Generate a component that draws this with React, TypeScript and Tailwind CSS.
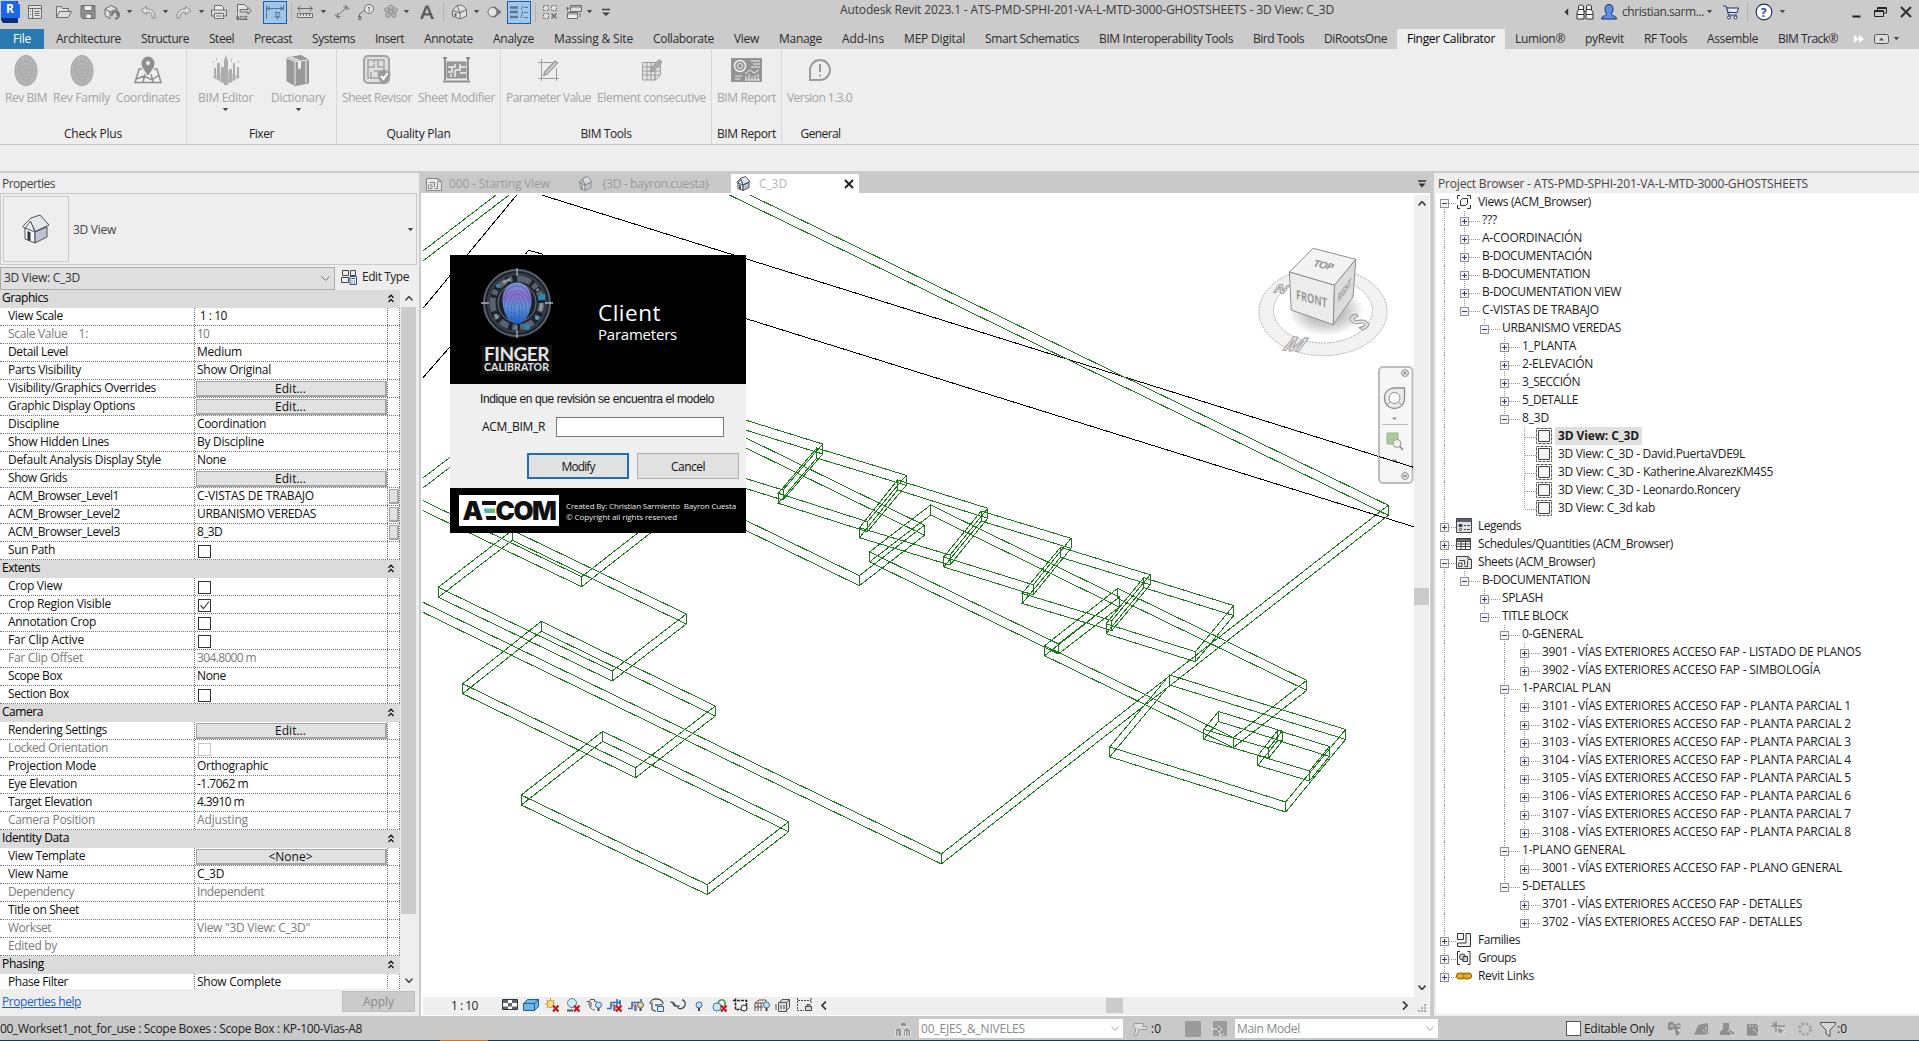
import React, { useLayoutEffect, useRef } from 'react';

/* Text fitted to a given advance width by distributing letter spacing. */
function T({ w, c = '', children }: { w?: number; c?: string; children: string }) {
  const ref = useRef<HTMLSpanElement>(null);
  useLayoutEffect(() => {
    const el = ref.current;
    if (!el || !w) return;
    el.style.letterSpacing = '0px';
    const natural = el.getBoundingClientRect().width;
    el.style.letterSpacing = `${(w - natural) / children.length}px`;
  }, [w, children]);
  return (
    <span ref={ref} className={`inline-block shrink-0 whitespace-pre ${c}`}>
      {children}
    </span>
  );
}

type IcProps = { c?: string; s?: string; f?: string; vb?: string; children: React.ReactNode };
function Ic({ c = 'w-4 h-4', s = '#6e6e6e', f = 'none', vb = '0 0 16 16', children }: IcProps) {
  return (
    <svg className={`block shrink-0 ${c}`} viewBox={vb} fill={f} stroke={s} strokeWidth="1">
      {children}
    </svg>
  );
}

const Arrow = ({ c = '' }: { c?: string }) => (
  <svg className={`block h-[4px] w-[7px] shrink-0 ${c}`} viewBox="0 0 7 4">
    <path d="M0.8 0h5.4L3.5 3.300z" fill="#4a4a4a" />
  </svg>
);

const Sep = ({ c = '' }: { c?: string }) => <span className={`h-5 w-px shrink-0 bg-[#b4b4b4] ${c}`} />;

function House({ c = 'w-4 h-4', dim = false, sw = 1.8 }: { c?: string; dim?: boolean; sw?: number }) {
  return (
    <svg className={`block shrink-0 ${c} ${dim ? 'opacity-50' : ''}`} viewBox="0 0 30 30" stroke="#3b434e" strokeWidth={sw} strokeLinejoin="round">
      <path d="M4 14L14 18V29L4 25z" fill="#f6f7f9" />
      <path d="M14 18L26 13V23L14 29z" fill="#bcc4cf" />
      <path d="M10 4L19 1L28 11L14 17.500L9.500 6.500z" fill="#e3e7ec" />
      <path d="M10 4L1.500 12.500L4 14.500L9.500 7L14 17.500" fill="#f6f7f9" />
      <path d="M6.500 17L9.500 18.200V27L6.500 25.800z" fill="#2f353d" stroke="none" />
    </svg>
  );
}

const SheetIcon = ({ c = 'w-4 h-4', s = '#6a6a6a' }: { c?: string; s?: string }) => (
  <Ic c={c} s={s}>
    <path d="M0.500 2.500H12l3.500 3V14.500H0.500zM12 2.500v3h3.500" fill="#e6e6e6" />
    <path d="M2.500 9.500V12.500h3.500V9H2.500M3.500 6.500h5V11M8.500 12.500h3V6.500" />
  </Ic>
);

/* ---------- Title bar ---------- */

function TitleBar() {
  return (
    <header className="flex h-[29px] items-start bg-[#cbcbcb] pt-1 text-[#3a3a3a]">
      <div className="flex h-4 grow items-center">
        <svg className="h-[22px] w-5 shrink-0" viewBox="0 0 20 22">
          <path d="M1 0H18V22H3L1 19z" fill="#0b2f7d" />
          <path d="M1 0H16L20 4V17H1z" fill="#1a67ea" />
          <text x="6" y="12" fontSize="12" fontWeight="700" fill="#fff" fontFamily="Open Sans, sans-serif">R</text>
        </svg>
        <Ic c="ml-[7px] w-4 h-4">
          <path d="M1.500 1.500h13v13h-13z" fill="#e2e2e2" /><path d="M1.500 4.500h13M5.500 4.500v10M3 7.500h1M3 10.500h1M7.500 7.500h5M7.500 9.500h5M7.500 11.500h5" />
        </Ic>
        <Ic c="ml-[13px] w-4 h-4"><path d="M0.500 13.500V2.500h5l1 2h6v3M0.500 13.500l3-6h12l-3.500 6z" fill="#dedede" /></Ic>
        <Ic c="ml-2 w-4 h-4"><path d="M1 1.500h14v13H2.500L1 13z" fill="#909090" /><path d="M4 1.500h8v5H4zM4.500 10h7v4.500h-7z" fill="#eee" /><path d="M6 11v3" /></Ic>
        <Ic c="ml-2 w-4 h-4"><path d="M1 5l6-3.500 6 3V9M1 5v6.500l5 3V8zM6 8l7-3.500" fill="#e0e0e0" /><path d="M8 11.500a3.500 3.500 0 1 1 3 3" strokeWidth="2" /><path d="M12 8l3 1-2 3" fill="#777" /></Ic>
        <Arrow c="ml-[6px]" />
        <Ic c="ml-[7px] w-4 h-4"><path d="M6.500 2.500L1 6.500l5.500 4V8.500c4-.5 6 1 5.500 5.500h3c.5-6-3-9.500-8.500-9z" fill="#dcdcdc" stroke="#8a8a8a" /></Ic>
        <Arrow c="ml-[6px]" />
        <Ic c="ml-[7px] w-4 h-4"><path d="M9.500 2.500L15 6.500l-5.500 4V8.500c-4-.5-6 1-5.500 5.500h-3c-.5-6 3-9.500 8.500-9z" fill="#dcdcdc" stroke="#8a8a8a" /></Ic>
        <Arrow c="ml-[6px]" />
        <Ic c="ml-[6px] w-4 h-4"><path d="M3.500 6V1.500h7l2 2V6" fill="#eee" /><path d="M0.500 6h15v6h-15z" fill="#d8d8d8" /><path d="M3.500 9.500h9v5h-9z" fill="#eee" /><path d="M5 12h6" /></Ic>
        <Ic c="ml-[9px] w-4 h-4"><path d="M1.500 9V0.500h7l3 3V9M1.500 10v5.500h10" fill="#e4e4e4" /><path d="M4 5.500h8v-2l3.500 3.200L12 10V8H4z" fill="#ccc" /><text x="0" y="15.500" fontSize="6" fontWeight="700" fill="#666" stroke="none" fontFamily="Open Sans, sans-serif">PDF</text></Ic>
        <span className="ml-[11px] flex h-[23px] w-6 items-center justify-center border border-[#1c5fad] bg-[#9fc7ee]">
          <Ic c="w-5 h-4" vb="0 0 20 16" s="#5c7690"><path d="M1.500 1v14M18.500 1v5M2 4.500h16M5 2.500l-3 2 3 2M15 2.500l3 2-3 2M10 8.500h5M11 9v4h3V9M12.500 13v3M9.500 13h6" /></Ic>
        </span>
        <Sep c="ml-1" />
        <Ic c="ml-[5px] w-4 h-4"><path d="M1 4.500h14M3.500 2l-3 2.500 3 2.500M12.500 2l3 2.500-3 2.500" /><path d="M0.500 9.500h15v4h-15zM3.500 10v2M6.500 10v2M9.500 10v2M12.500 10v2" fill="#ddd" /></Ic>
        <Arrow c="ml-[7px]" />
        <Ic c="ml-[7px] w-4 h-4"><path d="M3 12L13 3M0.500 10l4.500 5M11 1l4.500 4.500M3.500 9v3.500h3M13 6V3H9.500" /></Ic>
        <Ic c="ml-2 w-4 h-4"><circle cx="11" cy="5" r="4.500" fill="#e4e4e4" /><path d="M6.500 6.500L1.500 10v4M0 12.500h3v3H0z" /><path d="M10 4l1.200-1V8" /></Ic>
        <Ic c="ml-[9px] w-4 h-4" s="#8f8f8f">
          <g fill="#b8b8b8"><circle cx="8" cy="3.500" r="2.300" /><circle cx="4" cy="6" r="2.300" /><circle cx="12" cy="6" r="2.300" /><circle cx="5" cy="11" r="2.300" /><circle cx="11" cy="11" r="2.300" /><circle cx="8" cy="7.500" r="2" /></g>
        </Ic>
        <Arrow c="ml-1" />
        <Ic c="ml-[9px] w-4 h-4" s="none"><path d="M1 15L6.500 1.500h3L15 15h-3l-1.200-3.500H5.200L4 15zM6 9.200h4L8 4z" fill="#5f5f5f" fillRule="evenodd" /></Ic>
        <Sep c="ml-2" />
        <Ic c="ml-[7px] w-4 h-4"><path d="M1.500 6.500L6 1.500l5-.5 4.500 4.500V12L9 15 1.500 12zM1.500 6.500L9 9l6.500-3.500M9 9v6" fill="#e0e0e0" /><path d="M9 9L6 1.500" /><path d="M4.500 9v3.500" strokeWidth="2" /></Ic>
        <Arrow c="ml-[6px]" />
        <Ic c="ml-[6px] w-4 h-4"><path d="M8 2.500L15 8l-7 5.500z" fill="#777" /><circle cx="6.500" cy="8" r="4.500" fill="#e6e6e6" /></Ic>
        <span className="ml-[5px] flex h-[23px] w-6 items-center justify-center border border-[#1c5fad] bg-[#9fc7ee]">
          <Ic c="w-5 h-4" vb="0 0 20 16" s="#5c7690"><path d="M1 3.500h8M1 8h8M1 13h8" strokeWidth="2.500" /><path d="M14 2l-2 4M14 7l-2 7M15 3.500h4M15 8.500h4M15 13.500h4" /></Ic>
        </span>
        <Sep c="ml-1" />
        <Ic c="ml-[6px] w-4 h-4"><path d="M1.500 1.500h5v5h-5zM9.500 1.500h5v5h-5zM1.500 9.500h5v5h-5z" strokeDasharray="1.500 1" fill="#ddd" /><path d="M9.500 9.500l5 5M14.500 9.500l-5 5" strokeWidth="1.500" /></Ic>
        <Ic c="ml-2 w-4 h-4"><path d="M4.500 1.500h11v6h-11z" fill="#ddd" /><path d="M4.500 3h11" /><path d="M1.500 8.500h10v6h-10z" fill="#eee" /><path d="M1.500 10h10M1.500 7V3M0 5l1.500-2L3 5M14 9v4" /></Ic>
        <Arrow c="ml-1" />
        <Ic c="ml-2 w-[10px] h-3" vb="0 0 10 12" s="#444"><path d="M1 3.500h8" strokeWidth="1.500" /><path d="M1 6.500h8L5 10z" fill="#444" stroke="none" /></Ic>
        <div className="ml-[229px] -mt-1"><T w={494}>Autodesk Revit 2023.1 - ATS-PMD-SPHI-201-VA-L-MTD-3000-GHOSTSHEETS - 3D View: C_3D</T></div>
        <Ic c="ml-[230px] w-[5px] h-2" vb="0 0 6 9" s="none"><path d="M5 0v9L0.500 4.500z" fill="#333" /></Ic>
        <Ic c="ml-[7px] w-[18px] h-4" s="#333" vb="0 0 18 16"><path d="M2.500 6V2L4 1h2.500l1 1v4l.5 1v8H1V8zM15.500 6V2L14 1h-2.500l-1 1v4L10 7v8h7V8zM8 7.500h2M1 10.500h7M10 10.500h7M2.500 5.500h5M10.500 5.500h5" fill="#f4f4f4" /></Ic>
        <Ic c="ml-[7px] w-4 h-4" s="#1d2f63"><path d="M8 0.500c3 0 4 2 4 4.500S10.500 9 10.500 10.500s5 1 5 4.500H0.500c0-3.500 5-3 5-4.500S4 7.500 4 5 5 .5 8 .5z" fill="#5d8ee6" /></Ic>
        <T c="ml-[5px]" w={82}>christian.sarm...</T>
        <Arrow c="ml-[2px]" />
        <Ic c="ml-[10px] w-4 h-4" s="#1d2f63"><path d="M0 2h3l2.500 9H14M3.500 4h12L14 8.500H5" fill="#e8eefb" /><circle cx="6" cy="13.500" r="1.500" fill="#fff" /><circle cx="12.500" cy="13.500" r="1.500" fill="#fff" /></Ic>
        <Sep c="ml-2" />
        <Ic c="ml-[7px] w-[18px] h-[18px]" s="#1d2f63"><circle cx="8" cy="8" r="7" fill="#fff" /><text x="5.200" y="12" fontSize="11" fontWeight="700" fill="#2553c4" stroke="none" fontFamily="Open Sans, sans-serif">?</text></Ic>
        <Arrow c="ml-[6px]" />
        <Ic c="ml-[66px] w-[9px] h-3" vb="0 0 9 12" s="#222"><path d="M0.500 10.500h8" strokeWidth="2" /></Ic>
        <Ic c="ml-[13px] w-[13px] h-3" vb="0 0 13 12" s="#222"><path d="M3.500 4V1.500h9V7H9.500M0.500 4.500h9v6h-9zM0.500 5.500h9M3.500 2.500h9" /></Ic>
        <Ic c="ml-[13px] w-3 h-3" vb="0 0 12 12" s="#333"><path d="M1 1l10 10M11 1L1 11" strokeWidth="2.200" /></Ic>
      </div>
    </header>
  );
}

const TABS: [string, number][] = [
  ['Architecture', 65], ['Structure', 48], ['Steel', 25], ['Precast', 38], ['Systems', 43], ['Insert', 29],
  ['Annotate', 49], ['Analyze', 41], ['Massing & Site', 79], ['Collaborate', 61], ['View', 25], ['Manage', 43],
  ['Add-Ins', 42], ['MEP Digital', 61], ['Smart Schematics', 94], ['BIM Interoperability Tools', 134],
  ['Bird Tools', 51], ['DiRootsOne', 63], ['Finger Calibrator', 88], ['Lumion®', 50], ['pyRevit', 39],
  ['RF Tools', 43], ['Assemble', 51], ['BIM Track®', 60],
];

function TabRow() {
  return (
    <nav className="flex h-5 items-stretch bg-[#cbcbcb] text-[#2b2b2b]">
      <div className="mr-[2px] flex w-11 items-center justify-center bg-[#2a7ab2] text-white"><T w={18}>File</T></div>
      {TABS.map(([t, w]) => (
        <div key={t} className={`flex items-center px-[10px] ${t === 'Finger Calibrator' ? 'bg-[#eeeeee] text-black' : ''}`}>
          <T w={w}>{t}</T>
        </div>
      ))}
      <div className="ml-[6px] flex items-center">
        <Ic c="w-[10px] h-2" vb="0 0 10 8" s="none"><path d="M0 0l5 4-5 4zM5 0l5 4-5 4z" fill="#fff" /></Ic>
        <Ic c="ml-[10px] w-[15px] h-[10px]" vb="0 0 15 10" s="#555"><rect x="0.500" y="0.500" width="14" height="9" rx="2" fill="#ddd" /><path d="M5 6.500h5L7.500 3.500z" fill="#555" stroke="none" /></Ic>
        <Arrow c="ml-1" />
      </div>
    </nav>
  );
}

/* ---------- Ribbon ---------- */

const Egg = () => (
  <svg className="h-[31px] w-6" viewBox="0 0 24 31">
    <path d="M12 .5c6 0 11 7 11 15.500S18.500 30.500 12 30.500 1 24.500 1 16 6 .5 12 .5z" fill="#b4b4b4" stroke="#a6a6a6" />
    <path d="M5 10c3-5 11-5 14 0M4 16c2-7 14-7 16 0M6 22c-1-10 12-11 12 0M9 25c-2-9 6-9 6 1M12 15v11" fill="none" stroke="#a2a2a2" strokeDasharray="2 1" />
  </svg>
);

const RIcons: Record<string, React.ReactNode> = {
  'Rev BIM': <Egg />,
  'Rev Family': <Egg />,
  Coordinates: (
    <Ic c="w-[28px] h-[28px]" vb="0 0 28 28" s="#8f8f8f">
      <path d="M8 13H5L1 26.500h26L23 13h-3M9 26l2-8M19 26l-2-8M2.500 23L10 20l8 4 7-5" strokeWidth="1.500" />
      <path d="M14 19c-4-6-6-8-6-12a6 6 0 1 1 12 0c0 4-2 6-6 12z" fill="#8c8c8c" /><circle cx="14" cy="7" r="2.500" fill="#eee" />
    </Ic>
  ),
  'BIM Editor': (
    <Ic c="w-[30px] h-[31px]" vb="0 0 30 31" s="none">
      <path d="M1 22l14-7 14 7-14 8z" fill="#c9c9c9" />
      <path d="M3 13h2v11l-2-1zM6 8h3v18l-3-2zM10 12h3v16l-3-1zM13 6l2-6 2 6v24h-4zM18 14h3v13l-3 1zM22 8h2v17l-2 1zM26 12h2v11l-2 1z" fill="#adadad" />
      <path d="M2 6h1v2H2zM20 4h1v3h-1zM27 6h1v2h-1zM5 3h1v2H5z" fill="#bbb" />
    </Ic>
  ),
  Dictionary: (
    <Ic c="w-6 h-[31px]" vb="0 0 24 31" s="#909090">
      <path d="M1 3L15 .5 22.500 5V28L9 30.500 1 26z" fill="#999" /><path d="M1 3l8 3.500V30M9 6.500L22.500 5M3 2.500l8 3M5 2l8 3" stroke="#eee" /><path d="M12 6v9l1.500-2 1.500 1.500V6z" fill="#eee" stroke="none" /><path d="M20 6v22" stroke="#eee" />
    </Ic>
  ),
  'Sheet Revisor': (
    <Ic c="w-[28px] h-[30px]" vb="0 0 28 30" s="#a5a5a5">
      <rect x="1" y="1" width="25" height="27" rx="4" strokeWidth="2" fill="#dedede" /><path d="M5 5h16v18H5zM5 12h6v-3M11 5v3M11 16h10M15 5v7h6M8 23v-6" strokeWidth="1.500" />
      <path d="M15 17l6-2 6 2c0 7-2 10-6 12-4-2-6-5-6-12z" fill="#999" /><path d="M18 21l2.500 3 4-6" stroke="#fff" strokeWidth="2" />
    </Ic>
  ),
  'Sheet Modifier': (
    <Ic c="w-[29px] h-[26px]" vb="0 0 29 26" s="#8f8f8f">
      <path d="M3 1v22M26 1v22M1 1h4M24 1h4M1 24.500h27" strokeWidth="2" /><path d="M5 5h19v16H5z" fill="#9a9a9a" /><path d="M6 10h7V7M10 10v5H6M13 13h5V7M18 10h6M13 13v7M18 16h6M9 20v-3" stroke="#eee" strokeWidth="1.500" />
    </Ic>
  ),
  'Parameter Value': (
    <Ic c="w-[22px] h-[22px]" vb="0 0 22 22" s="#9d9d9d">
      <path d="M3.500 0v22M0 3.500h15M0 19.500h21M18.500 9v13" /><path d="M5 17l2-5L17 1.500l3 2.500L9.500 15z" fill="#aaa" /><path d="M8 14L18 4" stroke="#eee" />
    </Ic>
  ),
  'Element consecutive': (
    <Ic c="w-[22px] h-[22px]" vb="0 0 22 22" s="#9d9d9d">
      <path d="M1.500 3.500h18V16l-5 5h-13z" fill="#e4e4e4" /><path d="M2 8h17M2 12h17M2 16h12M6 4v17M10 4v17M14 4v17M14 21v-5h5" /><path d="M9 13l1-4L18 .5l3 2.500L13 12z" fill="#aaa" />
    </Ic>
  ),
  'BIM Report': (
    <Ic c="w-[31px] h-[24px]" vb="0 0 31 24" s="#eee">
      <path d="M0 0h31v24H0z" fill="#949494" stroke="none" /><circle cx="9" cy="8" r="5.500" strokeWidth="1.500" /><circle cx="9" cy="8" r="2.500" /><path d="M20 3h9M22 6h7M20 9h9M4 18h7M4 21h5M14 22h15M15 22v-4M18 22v-6M21 22v-4M24 22v-5M27 22v-6M14 16l5-4 4 3 5-3" />
    </Ic>
  ),
  'Version 1.3.0': (
    <Ic c="w-6 h-6" vb="0 0 24 24" s="#9c9c9c">
      <path d="M2 22V12a10 10 0 1 1 10 10z" strokeWidth="2" /><path d="M12 6v8M12 16.500v2" strokeWidth="2" />
    </Ic>
  ),
};

function RibbonPanel({ title, tw, c, items }: { title: string; tw: number; c: string; items: [string, number, boolean?][] }) {
  return (
    <section className={`flex shrink-0 flex-col border-r border-[#d8d8d8] ${c}`}>
      <div className="flex h-[75px] gap-[6px] pl-[5px] text-[#a3a3a3]">
        {items.map(([t, w, drop]) => (
          <div key={t} className={`flex flex-col items-center ${drop ? 'pl-[6px] pr-[6px]' : ''}`}>
            <div className="flex h-[42px] items-center justify-center">{RIcons[t]}</div>
            <div className="h-[14px] leading-[14px]"><T w={w}>{t}</T></div>
            {drop && <Arrow c="mt-[3px]" />}
          </div>
        ))}
      </div>
      <div className="text-center leading-5 text-[#222]"><T w={tw}>{title}</T></div>
    </section>
  );
}

function Ribbon() {
  return (
    <div className="h-[96px] shrink-0 border-b border-[#c3c3c3] bg-[#eeeeee]">
      <div className="flex h-[95px]">
        <RibbonPanel c="w-[187px]" title="Check Plus" tw={58} items={[['Rev BIM', 42], ['Rev Family', 57], ['Coordinates', 64]]} />
        <RibbonPanel c="w-[150px]" title="Fixer" tw={25} items={[['BIM Editor', 55, true], ['Dictionary', 54, true]]} />
        <RibbonPanel c="w-[164px]" title="Quality Plan" tw={64} items={[['Sheet Revisor', 70], ['Sheet Modifier', 77]]} />
        <RibbonPanel c="w-[211px]" title="BIM Tools" tw={51} items={[['Parameter Value', 85], ['Element consecutive', 109]]} />
        <RibbonPanel c="w-[70px]" title="BIM Report" tw={59} items={[['BIM Report', 59]]} />
        <RibbonPanel c="w-[77px] border-r-0" title="General" tw={40} items={[['Version 1.3.0', 65]]} />
      </div>
    </div>
  );
}

/* ---------- Properties ---------- */

type Row = { h?: string; n?: string; v?: string; b?: string; k?: 0 | 1 | 2; g?: boolean; m?: boolean; w?: number; vw?: number };
const ROWS: Row[] = [
  { h: 'Graphics', w: 46 },
  { n: 'View Scale', w: 55, v: ' 1 : 10', vw: 30 },
  { n: 'Scale Value    1:', w: 80, v: '10', vw: 12, g: true },
  { n: 'Detail Level', w: 60, v: 'Medium', vw: 45 },
  { n: 'Parts Visibility', w: 73, v: 'Show Original', vw: 74 },
  { n: 'Visibility/Graphics Overrides', w: 148, b: 'Edit...' },
  { n: 'Graphic Display Options', w: 127, b: 'Edit...' },
  { n: 'Discipline', w: 51, v: 'Coordination', vw: 69 },
  { n: 'Show Hidden Lines', w: 101, v: 'By Discipline', vw: 67 },
  { n: 'Default Analysis Display Style', w: 153, v: 'None', vw: 29 },
  { n: 'Show Grids', w: 59, b: 'Edit...' },
  { n: 'ACM_Browser_Level1', w: 111, v: 'C-VISTAS DE TRABAJO', vw: 117, m: true },
  { n: 'ACM_Browser_Level2', w: 112, v: 'URBANISMO VEREDAS', vw: 119, m: true },
  { n: 'ACM_Browser_Level3', w: 112, v: '8_3D', vw: 25, m: true },
  { n: 'Sun Path', w: 47, k: 0 },
  { h: 'Extents', w: 38 },
  { n: 'Crop View', w: 54, k: 0 },
  { n: 'Crop Region Visible', w: 103, k: 1 },
  { n: 'Annotation Crop', w: 88, k: 0 },
  { n: 'Far Clip Active', w: 76, k: 0 },
  { n: 'Far Clip Offset', w: 75, v: '304.8000 m', vw: 59, g: true },
  { n: 'Scope Box', w: 54, v: 'None', vw: 29 },
  { n: 'Section Box', w: 61, k: 0 },
  { h: 'Camera', w: 41 },
  { n: 'Rendering Settings', w: 99, b: 'Edit...' },
  { n: 'Locked Orientation', w: 100, k: 2, g: true },
  { n: 'Projection Mode', w: 88, v: 'Orthographic', vw: 71 },
  { n: 'Eye Elevation', w: 69, v: '-1.7062 m', vw: 51 },
  { n: 'Target Elevation', w: 84, v: '4.3910 m', vw: 47 },
  { n: 'Camera Position', w: 87, v: 'Adjusting', vw: 51, g: true },
  { h: 'Identity Data', w: 67 },
  { n: 'View Template', w: 77, b: '<None>' },
  { n: 'View Name', w: 60, v: 'C_3D', vw: 27 },
  { n: 'Dependency', w: 66, v: 'Independent', vw: 67, g: true },
  { n: 'Title on Sheet', w: 71 },
  { n: 'Workset', w: 43, v: 'View "3D View: C_3D"', vw: 113, g: true },
  { n: 'Edited by', w: 49, g: true },
  { h: 'Phasing', w: 42 },
  { n: 'Phase Filter', w: 60, v: 'Show Complete', vw: 84 },
];

function PropRow({ r }: { r: Row }) {
  if (r.h)
    return (
      <div className="flex h-[18px] items-start justify-between bg-[#dbdbdb] pl-[2px] pr-[6px] leading-4">
        <T w={r.w}>{r.h}</T>
        <Ic c="mt-[4px] w-[6px] h-[9px]" vb="0 0 6 9" s="#111"><path d="M0.500 3.800L3 1.200l2.500 2.600M0.500 8L3 5.400 5.500 8" strokeWidth="1.300" /></Ic>
      </div>
    );
  return (
    <div className={`flex h-[18px] items-stretch border-b border-dotted border-[#777] leading-4 ${r.g ? 'text-[#7b7b7b]' : 'text-[#111]'}`}>
      <div className="w-[194px] pl-2"><T w={r.w}>{r.n as string}</T></div>
      <div className={`flex w-[193px] border-l border-dotted border-[#777] ${r.b ? 'pl-px' : 'pl-[2px]'}`}>
        {r.v && <T w={r.vw}>{r.v}</T>}
        {r.b && (
          <button className="mt-px h-4 w-[191px] border border-r-2 border-b-2 border-[#a5a5a5] bg-[#e1e1e1] pr-px text-center leading-[13px] text-[#111]">{r.b}</button>
        )}
        {r.k !== undefined && (
          <span className={`ml-px mt-[3px] h-[13px] w-[13px] border bg-white ${r.k === 2 ? 'border-[#c8c8c8]' : 'border-[#333]'}`}>
            {r.k === 1 && <Ic c="w-[11px] h-[11px]" vb="0 0 11 11" s="#444"><path d="M1.500 5.500l3 3 5.500-7" strokeWidth="1.200" /></Ic>}
          </span>
        )}
      </div>
      <div className="flex w-[13px] border-x border-dotted border-[#777] pl-px pt-px">
        {r.m && <span className="h-[15px] w-[10px] border border-r-2 border-b-2 border-[#a5a5a5] bg-[#e1e1e1]" />}
      </div>
    </div>
  );
}

function Properties() {
  return (
    <aside className="flex w-[419px] shrink-0 flex-col bg-[#eeeeee]">
      <div className="h-5 pl-[2px] leading-[22px] text-[#444]"><T w={53}>Properties</T></div>
      <div className="flex h-[72px] w-[417px] items-center border border-[#c9c9c9] pl-[2px]">
        <div className="flex h-[66px] w-[66px] items-center justify-center border border-[#c9c9c9]"><House c="w-[30px] h-[30px]" sw={0.9} /></div>
        <T c="ml-[4px] mt-[2px] text-[#444]" w={43}>3D View</T>
        <Arrow c="ml-auto mr-[2px] mt-[2px]" />
      </div>
      <div className="flex h-[25px] items-center pt-px">
        <div className="flex h-[23px] w-[335px] items-center justify-between border border-[#ababab] bg-[#dfdfdf] pl-[3px] pr-1 text-[#333]">
          <T w={76}>3D View: C_3D</T>
          <Ic c="w-[9px] h-[5px]" vb="0 0 9 5"><path d="M0.500 0.500l4 4 4-4" /></Ic>
        </div>
        <Ic c="ml-[6px] w-4 h-4 -mt-[2px]" s="#444"><path d="M1.500 1.500h6v5h-6zM9.500 1.500h5v5h-5zM0.500 8.500h7v5h-7z" /><path d="M9 7.500h6.500v8H9z" fill="#e8f1fa" stroke="#36587c" /><path d="M10.500 9.500h3.500M10.500 12h1M13 12h1M10.500 14h1M13 14h1" stroke="#36587c" /></Ic>
        <T c="ml-[5px] -mt-[3px] text-[#222]" w={47}>Edit Type</T>
      </div>
      <div className="flex h-[699px]">
        <div className="h-[699px] w-[400px] overflow-hidden bg-white">{ROWS.map((r, i) => <PropRow key={i} r={r} />)}</div>
        <div className="ml-px flex w-[15px] flex-col items-center">
          <div className="flex h-[17px] items-center"><Ic c="w-2 h-[5px]" vb="0 0 8 5" s="#444"><path d="M0.500 4.500l3.500-4 3.500 4" strokeWidth="1.500" /></Ic></div>
          <div className="h-[607px] w-full bg-[#cbcbcb]" />
          <div className="mt-auto flex h-[17px] items-center"><Ic c="w-2 h-[5px]" vb="0 0 8 5" s="#444"><path d="M0.500 .5l3.500 4 3.500-4" strokeWidth="1.500" /></Ic></div>
        </div>
      </div>
      <div className="flex h-[27px] items-start justify-between pl-[2px] pr-1 pt-[2px]">
        <div className="leading-[21px] text-[#1c5fc0] underline"><T c="underline" w={79}>Properties help</T></div>
        <button className="h-[21px] w-[73px] border border-[#bdbdbd] bg-[#cbcbcb] pt-px text-[#8c8c8c]"><T w={31}>Apply</T></button>
      </div>
    </aside>
  );
}

/* ---------- 3D canvas ---------- */

type P = [number, number];
const SLABS: { p: P[]; open?: boolean }[] = [
  { p: [[438.3, 587.3], [512.3, 530.3], [686.3, 614], [612.3, 671]] },
  { p: [[462.7, 683.7], [541.3, 621.3], [715.3, 706], [635.7, 767.7]] },
  { p: [[521.3, 795], [602.7, 731.3], [788.7, 821.7], [707.3, 884.7]] },
  { p: [[402.1, 490.7], [581.7, 576.7], [680, 500]], open: true },
  { p: [[403, 493.3], [470, 442]], open: true },
  { p: [[402.400, 592.3], [941.3, 853.9], [1388.3, 505.3], [688.3, 165]], open: true },
  { p: [[535.1, 165], [405.2, 264.6]], open: true },
  { p: [[700, 415.5], [924.4, 525.3], [859.3, 575.7], [700, 498]], open: true },
  { p: [[869.6, 551.9], [930.6, 505], [1119.4, 597], [1058.4, 643.9]] },
  { p: [[1044.6, 645.7], [1117.6, 588.4], [1306.7, 680.4], [1233.3, 737.6]] },
  { p: [[700, 406], [822.7, 444], [783, 490], [700, 464.5]], open: true },
  { p: [[778.3, 493.3], [816.7, 448], [906.2, 475.3], [867.4, 521.7]] },
  { p: [[859.5, 527.7], [897.5, 480], [987.7, 508.3], [950, 555.1]] },
  { p: [[943.7, 557], [981.3, 511.1], [1071, 538.3], [1033.3, 584.8]] },
  { p: [[1022.2, 593.4], [1060.5, 547.3], [1150.3, 574.8], [1111.8, 620.6]] },
  { p: [[1106, 623.8], [1143.8, 577.7], [1233.7, 605.6], [1195.5, 651.7]] },
  { p: [[1109.7, 746.9], [1169.6, 675], [1345.6, 729.4], [1285.7, 802]] },
  { p: [[1203.7, 729.4], [1218.5, 711.5], [1282.2, 731.2], [1268.5, 748.3]] },
  { p: [[1257.8, 755.5], [1277.8, 730.4], [1329.4, 746.5], [1309.4, 770.9]] },
];

const DEPTH = 10;
const ring = (pts: P[], dy: number, open?: boolean) =>
  'M' + pts.map(([x, y]) => `${x} ${(y + dy).toFixed(1)}`).join('L') + (open ? '' : 'Z');

function Canvas() {
  return (
    <svg className="block h-[802px] w-[991px]" viewBox="423 195 991 802" fill="none">
      <g stroke="#000" shapeRendering="crispEdges">
        <path d="M516.700 195L467.700 254.300L423 308.300M470 324L423 377.700M525.300 254.300L528.300 250.300L543.300 254.300M541.700 195L1413.500 467.300M700 304.300L1413.500 526.700" />
      </g>
      <g stroke="#1b781b" shapeRendering="crispEdges">
        {SLABS.map((s, i) => (
          <React.Fragment key={i}>
            <path d={ring(s.p, 0, s.open)} />
            <path d={ring(s.p, DEPTH, s.open)} />
            <path d={s.p.map(([x, y]) => `M${x} ${y}v${DEPTH}`).join('')} />
          </React.Fragment>
        ))}
      </g>
      {/* view cube */}
      <defs>
        <radialGradient id="shade"><stop offset="0" stopColor="#777" stopOpacity="0.800" /><stop offset="0.600" stopColor="#888" stopOpacity="0.400" /><stop offset="1" stopColor="#888" stopOpacity="0" /></radialGradient>
      </defs>
      <path fillRule="evenodd" fill="#f2f2f2" stroke="#b0b0b0" strokeDasharray="2 1" d="M1259 311.700a64 44 0 1 0 128 0a64 44 0 1 0-128 0zM1273.500 310.500a49.500 32.500 0 1 0 99 0a49.500 32.500 0 1 0-99 0z" />
      <ellipse cx="1326" cy="311" rx="38" ry="25" fill="url(#shade)" />
      <g stroke="#8e8e8e" strokeLinejoin="round">
        <path d="M1289.400 272L1313 248.300L1355.800 259.300L1334.500 285.300z" fill="#f3f3f3" />
        <path d="M1289.400 272L1334.500 285.300L1333.300 324.700L1291.300 310z" fill="#ececec" />
        <path d="M1334.500 285.300L1355.800 259.300L1353 296.700L1333.300 324.700z" fill="#dcdcdc" />
      </g>
      <g fill="#999" fontFamily="Open Sans, sans-serif" fontWeight="700">
        <text transform="matrix(1 .22 -.45 .8 1312 266)" fontSize="11" textLength="20">TOP</text>
        <text transform="matrix(.97 .27 0 1 1296 299)" fontSize="13" textLength="32" lengthAdjust="spacingAndGlyphs">FRONT</text>
        <text transform="matrix(.62 -.8 0 1 1338 303)" fontSize="12" textLength="21" lengthAdjust="spacingAndGlyphs">RIGHT</text>
        <g fill="#e6e6e6" stroke="#9a9a9a" strokeWidth="0.900">
          <text transform="matrix(1.050 .15 -.55 .75 1272 292)" fontSize="15">N</text>
          <text transform="matrix(.8 -.6 1 .75 1362 331)" fontSize="21">S</text>
          <text transform="matrix(1 .1 -.75 .95 1281 350)" fontSize="20">M</text>
        </g>
      </g>
      {/* navigation bar */}
      <g stroke="#bdbdbd">
        <rect x="1379" y="367" width="33.500" height="116" rx="4" fill="#f4f4f4" fillOpacity="0.800" strokeWidth="2" />
        <circle cx="1405" cy="373" r="3.500" fill="#ddd" stroke="#999" /><path d="M1403.500 371.500l3 3M1406.500 371.500l-3 3" stroke="#888" />
        <path d="M1384.500 398c0-7 5-10 10-10h10v10c0 7-5 10.500-10 10.500s-10-4-10-10.500z" fill="#ececec" stroke="#8e8e8e" strokeWidth="1.300" />
        <circle cx="1394.500" cy="398" r="5.500" fill="#fff" stroke="#8e8e8e" /><path d="M1388 404l2.500-2.500M1398.500 402l3 3" stroke="#8e8e8e" />
        <path d="M1392 417.500h5l-2.500 2.500z" fill="#888" stroke="none" /><path d="M1382 424.500h26" />
        <path d="M1387 433h11v11h-11z" fill="#aacb9c" stroke="#93b585" /><circle cx="1397" cy="443.500" r="4" fill="#f2f2f2" stroke="#999" /><path d="M1399.500 446l3.500 4" stroke="#888" strokeWidth="1.500" />
        <path d="M1392 459.500h5l-2.500 2.500z" fill="#888" stroke="none" />
        <circle cx="1405" cy="476" r="3.500" fill="#ddd" stroke="#999" /><path d="M1403 476h4" stroke="#777" />
      </g>
      <path d="M1379 456.600L1413.500 467.300" stroke="#000" shapeRendering="crispEdges" />
    </svg>
  );
}

/* ---------- Dialog ---------- */

function Dialog() {
  return (
    <div className="absolute left-[29px] top-[82px] flex w-[296px] flex-col">
      <div className="flex h-[129px] bg-black text-white">
        <div className="flex w-[148px] flex-col items-center pr-[15px] pt-[13px]">
          <svg className="h-[70px] w-[72px] shrink-0" viewBox="-36 -35 72 70" fill="none">
            <circle r="33" fill="#1d222b" stroke="#59616e" strokeWidth="2" />
            <circle r="29" stroke="#39404c" strokeWidth="2" />
            <circle r="24.500" stroke="#59626f" strokeWidth="6" strokeDasharray="9 4 3 5 14 3 5 4" />
            <circle r="24.500" stroke="#8d96a1" strokeWidth="3" strokeDasharray="8 30 2 20 5 35" />
            <circle r="19" stroke="#747c88" />
            <path d="M-36 0h8M28 0h8M0-35v8M0 27v8" stroke="#aab0b8" strokeWidth="1.300" />
            <rect x="22" y="-9" width="6" height="6" fill="#1f8bb8" />
            <circle cx="10" cy="24" r="3" fill="#3086b8" /><circle cx="20" cy="15" r="2" fill="#5aa0c8" /><circle cx="-19" cy="-17" r="2" fill="#4c86a8" />
            <defs><linearGradient id="fp" x1="0" y1="0" x2="0" y2="1"><stop offset="0" stopColor="#7f9fd8" /><stop offset="0.300" stopColor="#8a6cc8" /><stop offset="0.600" stopColor="#5f90d6" /><stop offset="1" stopColor="#1d5cc4" /></linearGradient></defs>
            <path d="M0-20.500c9 0 14.500 8 14.500 17 0 12-6 24.500-14.500 24.500S-14.500 8.500-14.500-3.500c0-9 5.500-17 14.500-17z" fill="url(#fp)" />
            <path d="M-11-10c4-11 18-11 22 0M-13-3c2-18 24-18 26 0M-12 6c-3-24 27-24 24 0M-9 12c-3-28 21-28 18 0M-5 16c-5-28 15-28 10 0M-2 18c-3-26 7-26 4 0" stroke="#33509c" strokeWidth="0.800" strokeDasharray="1.500 1" />
          </svg>
          <div className="mt-[7px] flex h-[29px] w-[70px] shrink-0 flex-col items-center bg-[#101214] pt-px font-['Lato'] text-[#e4e4e4]">
            <span className="flex h-[15px] text-[19px] font-bold leading-[15px]"><T w={65}>FINGER</T></span>
            <span className="mt-px flex h-[11px] text-[10.500px] font-bold leading-[11px]"><T w={65}>CALIBRATOR</T></span>
          </div>
        </div>
        <div className="flex flex-col items-start pt-[43px]">
          <span className="h-[28px] text-[22.500px] leading-[30px]"><T w={63}>Client</T></span>
          <span className="text-[15px] leading-4"><T w={79}>Parameters</T></span>
        </div>
      </div>
      <div className="flex h-[104px] flex-col bg-[#efefef] text-[#111]">
        <div className="pl-[30px] pt-[6px] font-['Liberation_Sans'] leading-[18px]"><T w={234}>Indique en que revisión se encuentra el modelo</T></div>
        <div className="mt-[9px] flex items-center pl-8">
          <T w={63}>ACM_BIM_R</T>
          <div className="ml-[11px] h-5 w-[168px] border border-[#7a7a7a] bg-white" />
        </div>
        <div className="mt-4 flex gap-2 pl-[77px]">
          <button className="h-[26px] w-[102px] border-2 border-[#1b6fb8] bg-[#e1e1e1] pt-px"><T w={33}>Modify</T></button>
          <button className="h-[26px] w-[102px] border border-[#adadad] bg-[#e1e1e1] pt-px"><T w={34}>Cancel</T></button>
        </div>
      </div>
      <div className="flex h-[45px] items-center bg-black pl-[9px] text-white">
        <div className="flex h-[31px] w-[100px] items-center justify-center bg-white font-['Inter'] text-[26px] font-black leading-none text-[#111]">
          <T w={20}>A</T>
          <svg className="-ml-px h-[19px] w-[14px] shrink-0" viewBox="0 0 15 19" preserveAspectRatio="none">
            <defs><linearGradient id="bar"><stop offset="0" stopColor="#35b4dd" /><stop offset="1" stopColor="#7ac143" /></linearGradient></defs>
            <path d="M-2 0h17v4H0z" fill="#111" /><path d="M2 7.500h12v4.500H3z" fill="url(#bar)" /><path d="M4 15h11v4H5z" fill="#111" />
          </svg>
          <T w={60}>COM</T>
        </div>
        <div className="ml-[7px] flex flex-col items-start pt-px text-[8px] leading-[11px] text-[#e8e8e8]">
          <T w={170}>Created By: Christian Sarmiento  Bayron Cuesta</T>
          <T w={111}>© Copyright all rights reserved</T>
        </div>
      </div>
    </div>
  );
}

const RedX = () => <path d="M9 8.500l5.500 6M14.500 8.500L9 14.500" stroke="#c4161c" strokeWidth="2.200" />;
const Bulb = ({ c = '#bfe3f7', x = 11.5 }: { c?: string; x?: number }) => (
  <g><circle cx={x} cy="8" r="3" fill={c} stroke="#3a6fa8" /><path d={`M${x} 11v3`} stroke="#444" strokeWidth="2" /></g>
);

function ViewBar() {
  return (
    <div className="flex h-[18px] items-center bg-[#efefef] pb-[2px] text-[#222]">
      <T c="ml-7 mr-6 mt-[2px]" w={27}>1 : 10</T>
      <div className="flex items-center gap-[5px]">
        <Ic s="#333"><path d="M0.500 2.500h15v10h-15z" fill="#fff" /><path d="M1 3h5v3H1zM10 3h5v3h-5zM6 6h4v3.500H6zM1 9.500h5V12H1zM10 9.500h5V12h-5z" fill="#5d6670" stroke="none" /></Ic>
        <Ic s="#1f5f8f"><path d="M0.500 6.500l4-4h11v7l-4 4h-11z" fill="#6fb5e6" /><path d="M0.500 6.500h11v7M11.500 6.500l4-4" /></Ic>
        <Ic s="#c88a12"><circle cx="6.500" cy="7" r="3.500" fill="#fbe08a" /><path d="M6.500 1v2M1 7h1.500M2.500 3l1.500 1M10.500 3L9.500 4M2.500 11l1-1" /><RedX /></Ic>
        <Ic s="#4b7fb0"><circle cx="7" cy="6" r="4.500" fill="#d5eafa" /><path d="M2 13.500h6" stroke="#555" strokeWidth="2" /><RedX /></Ic>
        <Ic s="#555"><path d="M0.500 4.500h3l1-2h4v2h2M3 5c0 5 2 8 6 8M5 5v5" /><Bulb x={12.5} /></Ic>
        <Ic s="#2f6fb5"><path d="M0 11.500h4v-6h10M7 14V8.500M10 2v6M13 3v5" strokeWidth="1.500" /><path d="M4 8h4v6" stroke="#b03030" /><RedX /></Ic>
        <Ic s="#2f6fb5"><path d="M0 11.500h4v-6h10M7 14V8.500M13 2v4" strokeWidth="1.500" /><path d="M4 8h4v6" stroke="#b03030" /><Bulb x={12.5} c="#fbd56a" /></Ic>
        <Ic s="#555"><path d="M1 7c0-4 4-5 6-5 4 0 7 2 7 5M3 5.500v7l4 2M6 8h3" strokeWidth="1.300" /><path d="M8.500 9.500h6v5h-6z" fill="#dceefa" stroke="#36648a" /><path d="M10 9V7.500h3V9" stroke="#36648a" /></Ic>
        <Ic s="#44505c"><path d="M0.500 5l3 .5c1 3 4 5 6 3M8 10c0 3 6 2 7-2s-2-5-3-5M3 6c0 2 2 4 4 3" strokeWidth="1.300" /></Ic>
        <Ic s="#555"><Bulb x={8} /></Ic>
        <Ic s="#2f7fb0"><circle cx="5" cy="10" r="4" fill="#cde7f7" /><path d="M6 6c1-4 6-4 7-1v4" stroke="#3c9a4a" strokeWidth="1.500" /><RedX /></Ic>
        <Ic s="#222"><path d="M2.500 1.500v11h11M0 3.500h13.500v10" strokeDasharray="3 1" strokeWidth="1.500" /><circle cx="11" cy="11" r="3" fill="#fff" /></Ic>
        <Ic s="#444"><path d="M1 6l4-3h7v3M1 6v8M4 6v8M1 10h8M7 6v8M1 6h9" stroke="#6a4a4a" /><Bulb x={12.5} /></Ic>
        <Ic s="#555"><path d="M4.500 5.500L7 2.500h7.500v8L12 13M3.500 5.500h8v9h-8z" fill="#ddd" /><path d="M1 7v6M6 8v4M9 8v4M11.500 5.500l3-3" /></Ic>
        <Ic s="#444"><path d="M1.500 1v6M15 1v6M2 3.500h13M1.500 7v6.500H8" strokeDasharray="2 1" /><path d="M9.500 9.500h6v4h-6zM11 9V7.500h3V9" fill="#ddd" /></Ic>
        <Ic c="ml-1 w-[6px] h-[9px]" vb="0 0 6 9" s="#333"><path d="M5 0.500L1 4.500l4 4" strokeWidth="1.700" /></Ic>
      </div>
      <div className="ml-[279px] h-[15px] w-[17px] bg-[#cbcbcb]" />
      <Ic c="ml-[279px] w-[6px] h-[9px]" vb="0 0 6 9" s="#333"><path d="M1 0.500l4 4-4 4" strokeWidth="1.700" /></Ic>
    </div>
  );
}

function ViewArea() {
  return (
    <main className="relative flex w-[1011px] shrink-0 flex-col border-l-2 border-[#cbcbcb] bg-white">
      <div className="flex h-5 bg-[#c9c9c9] pt-px text-[#999]">
        <div className="flex w-[153px] items-center pl-[5px]"><SheetIcon s="#888" /><T c="ml-[7px] mt-px" w={101}>000 - Starting View</T></div>
        <div className="flex w-[157px] items-center pl-[4px]"><House c="w-[15px] h-[15px]" dim /><T c="ml-[9px] mt-px" w={107}>{'{3D - bayron.cuesta}'}</T></div>
        <div className="flex w-[128px] items-center bg-white pl-[5px] pr-[5px] text-[#b5b5b5]">
          <House c="w-[15px] h-[15px]" /><T c="ml-2 mt-px" w={28}>C_3D</T>
          <Ic c="ml-auto w-[10px] h-[10px]" vb="0 0 10 10" s="#222"><path d="M1 1l8 8M9 1L1 9" strokeWidth="2" /></Ic>
        </div>
        <div className="ml-auto flex items-center pr-1"><Ic c="w-2 h-2" vb="0 0 8 8" s="#333"><path d="M0 1h8" strokeWidth="1.500" /><path d="M0.500 3.500h7L4 7.500z" fill="#333" stroke="none" /></Ic></div>
      </div>
      <div className="flex pl-[2px] pt-[2px]">
        <Canvas />
        <div className="flex h-[802px] w-[15px] flex-col items-center bg-[#efefef]">
          <Ic c="mt-[6px] w-2 h-[5px]" vb="0 0 8 5" s="#444"><path d="M0.500 4.500l3.500-4 3.500 4" strokeWidth="1.700" /></Ic>
          <div className="mt-[382px] h-[17px] w-[15px] bg-[#cbcbcb]" />
          <Ic c="mb-[7px] mt-auto w-2 h-[5px]" vb="0 0 8 5" s="#444"><path d="M0.500 .5l3.500 4 3.500-4" strokeWidth="1.700" /></Ic>
        </div>
      </div>
      <div className="flex pl-[2px]">
        <div className="w-[991px]"><ViewBar /></div>
        <div className="flex w-[15px] items-end justify-end bg-[#efefef] p-[3px]"><Ic c="w-2 h-2" vb="0 0 8 8" s="none"><path d="M6 0h2v2H6zM3 3h2v2H3zM6 3h2v2H6zM0 6h2v2H0zM3 6h2v2H3zM6 6h2v2H6z" fill="#aaa" /></Ic></div>
      </div>
      <Dialog />
    </main>
  );
}

/* ---------- Project browser ---------- */

type Node = [depth: number, mark: '+' | '-' | '', text: string, width: number, icon?: string];
const TREE: Node[] = [
  [0, '-', 'Views (ACM_Browser)', 113, 'views'],
  [1, '+', '???', 15], [1, '+', 'A-COORDINACIÓN', 100], [1, '+', 'B-DOCUMENTACIÓN', 110],
  [1, '+', 'B-DOCUMENTATION', 108], [1, '+', 'B-DOCUMENTATION VIEW', 139], [1, '-', 'C-VISTAS DE TRABAJO', 117],
  [2, '-', 'URBANISMO VEREDAS', 119],
  [3, '+', '1_PLANTA', 54], [3, '+', '2-ELEVACIÓN', 71], [3, '+', '3_SECCIÓN', 58], [3, '+', '5_DETALLE', 56], [3, '-', '8_3D', 27],
  [4, '', '3D View: C_3D', 81], [4, '', '3D View: C_3D - David.PuertaVDE9L', 187],
  [4, '', '3D View: C_3D - Katherine.AlvarezKM4S5', 215], [4, '', '3D View: C_3D - Leonardo.Roncery', 182], [4, '', '3D View: C_3d kab', 97],
  [0, '+', 'Legends', 43, 'legends'], [0, '+', 'Schedules/Quantities (ACM_Browser)', 195, 'schedules'],
  [0, '-', 'Sheets (ACM_Browser)', 117, 'sheets'],
  [1, '-', 'B-DOCUMENTATION', 108], [2, '+', 'SPLASH', 41], [2, '-', 'TITLE BLOCK', 66],
  [3, '-', '0-GENERAL', 61],
  [4, '+', '3901 - VÍAS EXTERIORES ACCESO FAP - LISTADO DE PLANOS', 319], [4, '+', '3902 - VÍAS EXTERIORES ACCESO FAP - SIMBOLOGÍA', 278],
  [3, '-', '1-PARCIAL PLAN', 89],
  ...[1, 2, 3, 4, 5, 6, 7, 8].map((n): Node => [4, '+', `310${n} - VÍAS EXTERIORES ACCESO FAP - PLANTA PARCIAL ${n}`, 309]),
  [3, '-', '1-PLANO GENERAL', 103],
  [4, '+', '3001 - VÍAS EXTERIORES ACCESO FAP - PLANO GENERAL', 300],
  [3, '-', '5-DETALLES', 63],
  [4, '+', '3701 - VÍAS EXTERIORES ACCESO FAP - DETALLES', 260], [4, '+', '3702 - VÍAS EXTERIORES ACCESO FAP - DETALLES', 260],
  [0, '+', 'Families', 42, 'families'], [0, '+', 'Groups', 38, 'groups'], [0, '+', 'Revit Links', 56, 'links'],
];

const TIcons: Record<string, React.ReactNode> = {
  views: <Ic s="#333"><path d="M4 1.500H1.500V5M11 1.500h3.500V5M4 14.500H1.500V11M11 14.500h3.500V11" /><path d="M4.500 6.500l2-2h5v5l-2 2h-5z" fill="#f4f4f4" /></Ic>,
  legends: <Ic s="#444"><path d="M0.500 0.500h15v14h-15z" fill="#dfe3e8" /><path d="M1 1h14v3H1z" fill="#5a636e" stroke="none" /><path d="M3 6.500h3v2H3z" fill="#444" /><circle cx="4.500" cy="11.500" r="1.200" /><path d="M8 7.500h2M11 7.500h3M8 11.500h2M11 11.500h3" /></Ic>,
  schedules: <Ic s="#444"><path d="M0.500 2.500h14v11h-14z" fill="#fff" /><path d="M1 3h13v2.500H1z" fill="#778" /><path d="M1 8h13M1 10.500h13M5 5v8M9.500 5v8" /></Ic>,
  sheets: <SheetIcon s="#444" />,
  families: <Ic s="#333"><path d="M1.500 1.500h6v6h-6zM10 1.500h4.500v13h-13V11H10z" fill="#f4f4f4" /></Ic>,
  groups: <Ic s="#333"><path d="M4 1.500H1.500v13H4M11.500 1.500H14v13h-2.500" /><circle cx="6.500" cy="7" r="3" fill="#ddd" /><path d="M7 6.500h4.500v5H7z" fill="#c8d0d8" fillOpacity="0.700" /></Ic>,
  links: <Ic s="#b27c00"><rect x="0.800" y="5.500" width="8" height="5" rx="2.500" strokeWidth="1.800" fill="#f6d27a" /><rect x="7.200" y="5.500" width="8" height="5" rx="2.500" strokeWidth="1.800" fill="#f6d27a" /><path d="M3 8h10" stroke="#d59a1a" strokeWidth="1.500" /></Ic>,
};

const continues = (i: number, level: number) => {
  for (let j = i + 1; j < TREE.length; j++) {
    if (TREE[j][0] < level) return false;
    if (TREE[j][0] === level) return true;
  }
  return false;
};

function TreeRow({ i }: { i: number }) {
  const [depth, mark, text, w, icon] = TREE[i];
  const next = continues(i, depth);
  const end = depth === 0 ? 22 : 26;
  return (
    <li className="flex h-[18px] items-center leading-[18px]">
      {Array.from({ length: depth }, (_, k) => (
        <span key={k} className="flex h-full w-5 shrink-0 pl-[10px]">
          {continues(i, k) && <i className="border-l border-dotted border-[#9a9a9a]" />}
        </span>
      ))}
      <svg className={`h-[18px] shrink-0 ${mark === '' ? 'w-[22px]' : depth === 0 ? 'w-[22px]' : 'w-7'}`} fill="none" stroke="#9a9a9a" shapeRendering="crispEdges">
        <path strokeDasharray="1 1" d={`${i ? 'M10.500 0V10' : ''}${next ? 'M10.500 10V18' : ''}M10.500 10.500H${end - (mark ? 0 : 4)}`} />
        {mark && <rect x="6.500" y="6.500" width="8" height="8" fill="#f4f4f4" stroke="#919191" />}
        {mark && <path stroke="#2f3f7a" d={mark === '+' ? 'M8 10.500h5M10.500 8v5' : 'M8 10.500h5'} />}
      </svg>
      {icon && <span className="mr-[6px]">{TIcons[icon]}</span>}
      {!mark && (
        <Ic c="w-4 h-4 mr-[3px]"><path d="M0.500 0.500h15v15h-15z" stroke="#555" strokeDasharray="3 1" /><path d="M2.500 2.500h11v11h-11z" fill="#f5f5f5" stroke="#444" /></Ic>
      )}
      <span className={!mark ? `px-[3px] ${i === 13 ? 'bg-[#e0e0e0] font-bold' : ''}` : ''}><T w={w}>{text}</T></span>
    </li>
  );
}

function Browser() {
  return (
    <aside className="flex grow flex-col border-l-[4px] border-[#cbcbcb] bg-[#eeeeee]">
      <div className="h-5 pl-1 leading-[22px] text-[#444]"><T w={370}>Project Browser - ATS-PMD-SPHI-201-VA-L-MTD-3000-GHOSTSHEETS</T></div>
      <ul className="ml-[2px] h-[821px] overflow-hidden bg-white text-[#1c1c1c]">
        {TREE.map((_, i) => <div key={i} className="-ml-[2px]"><TreeRow i={i} /></div>)}
      </ul>
    </aside>
  );
}

/* ---------- Status bar ---------- */

const Combo = ({ c, t, w }: { c: string; t: string; w: number }) => (
  <div className={`flex h-[19px] shrink-0 items-center justify-between bg-white pl-[2px] pr-1 text-[#8a8a8a] ${c}`}>
    <T w={w}>{t}</T>
    <Ic c="w-2 h-[5px]" vb="0 0 8 5" s="#aaa"><path d="M0.500 0.500l3.500 4 3.500-4" /></Ic>
  </div>
);

function StatusBar() {
  return (
    <footer className="flex h-6 items-center bg-[#c9c9c9] pt-px text-[#222]">
      <div className="w-[895px] shrink-0"><T w={362}>00_Workset1_not_for_use : Scope Boxes : Scope Box : KP-100-Vias-A8</T></div>
      <Ic s="#ececec" f="#929292"><path d="M0.500 15.500V8.500l3-2 3 2v7zM8.500 15.500V9l3-2.500 4 2.500v6.500zM4.500 5.500l2-4.500h4l2 4.500z" strokeWidth="0.800" /><path d="M3 10v5M10.500 10v5M13 10v5" /></Ic>
      <Combo c="ml-2 w-[204px]" t="00_EJES_&_NIVELES" w={104} />
      <Ic c="ml-[9px] w-4 h-4" s="#999"><path d="M2.500 2.500h9l-1 3h4v3h-6M3 2.500c-2 1-2 4 1 5l-2 7h3l2-7" fill="#e2e2e2" /></Ic>
      <T c="ml-[3px]" w={10}>:0</T>
      <Ic c="ml-6 w-4 h-4" s="none"><rect width="16" height="16" rx="1" fill="#9b9b9b" /></Ic>
      <Ic c="ml-[10px] w-4 h-4" s="#eee"><path d="M2 0h14v15H2z" fill="#9b9b9b" stroke="none" /><path d="M1 8h6M7 5l4 3-4 3M9 10v5l4-3" fill="#888" /></Ic>
      <Combo c="ml-2 w-[203px]" t="Main Model" w={63} />
      <div className="ml-[128px] h-[15px] w-[15px] border border-[#555] bg-white" />
      <T c="ml-[3px]" w={70}>Editable Only</T>
      <div className="ml-[13px] flex gap-[10px]">
        <Ic s="#e4e4e4" f="#8f8f8f"><path d="M0.500 4.500a3.500 3.500 0 0 1 7-1.500h1a3.500 3.500 0 1 1 2 5.500l3 3.500-2 3h-3L7 8a3.500 3.500 0 0 1-6.500-3.500z" strokeWidth="0.700" /><path d="M3 5h3M10 5h4" /></Ic>
        <Ic s="#e4e4e4" f="#8f8f8f"><path d="M0.500 14L5 3.500 15.500 1.500V14z" strokeWidth="0.500" /><path d="M10 9l5 5M13 6v4" strokeDasharray="2 1" /></Ic>
        <Ic s="#e4e4e4" f="#8f8f8f"><path d="M3.500 8.500V1.500h7v7l5 2.500v3.500H0.500v-4z" strokeWidth="0.500" /><path d="M9 9l6 6M11 14h4" strokeDasharray="2 1" /></Ic>
        <Ic s="#e4e4e4" f="#8f8f8f"><path d="M1.500 2.500h12v12.500h-12z" strokeWidth="0.500" /><path d="M10 6l5-5M8 8l7 7M4 5h4" strokeDasharray="2 1" /></Ic>
        <Ic s="#8f8f8f"><path d="M5 0v11M0 5h14M2 2l6 6" strokeWidth="1.500" /><path d="M6 6l9 4-4 1 3 4-5-3-1 3z" fill="#8f8f8f" stroke="#e4e4e4" strokeWidth="0.800" /></Ic>
        <Ic s="#a4a4a4"><circle cx="8" cy="8" r="5.500" strokeWidth="2.800" strokeDasharray="2.800 1.520" /></Ic>
      </div>
      <Ic c="ml-[7px] w-4 h-4" s="#555"><path d="M0.500 1.500h15v2L10 9v6.500L6 13V9L.5 3.500z" fill="#d5d5d5" /></Ic>
      <T c="ml-px" w={10}>:0</T>
    </footer>
  );
}

export default function App() {
  return (
    <div className="flex h-[1041px] w-[1919px] flex-col overflow-hidden bg-[#eeeeee] font-['Open_Sans','Noto_Sans',sans-serif] text-[12px] leading-4">
      <TitleBar />
      <TabRow />
      <Ribbon />
      <div className="h-[26px] shrink-0 bg-[#eeeeee]" />
      <div className="h-[2px] shrink-0 bg-[#cbcbcb]" />
      <div className="flex h-[843px] shrink-0">
        <Properties />
        <ViewArea />
        <Browser />
      </div>
      <StatusBar />
      <div className="flex h-px bg-[#1f3a4a] pl-[440px]"><span className="w-12 bg-[#c8752c]" /></div>
    </div>
  );
}
